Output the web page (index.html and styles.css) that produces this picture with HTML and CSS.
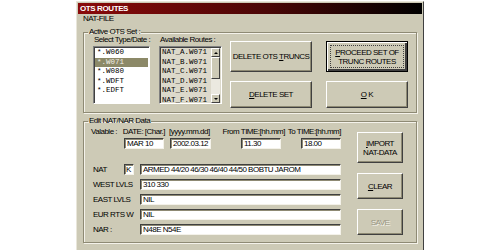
FILE: index.html
```html
<!DOCTYPE html>
<html>
<head>
    <link rel="stylesheet" href="styles.css">
</head>

<body>
<div class="window">
  <div class="titlebar">OTS ROUTES</div>
  <div class="menu">NAT-FILE</div>

  <fieldset class="group">
    <legend>Active OTS Set :</legend>
    <div class="ots-row">
      <div class="col col-types">
        <div class="cap">Select Type/Date :</div>
        <ul class="list list-types">
          <li>*.W060</li>
          <li class="sel">*.W071</li>
          <li>*.W080</li>
          <li>*.WDFT</li>
          <li>*.EDFT</li>
        </ul>
      </div>
      <div class="col col-routes">
        <div class="cap">Available Routes :</div>
        <div class="list list-routes">
          <ul>
            <li>NAT_A.W071</li>
            <li>NAT_B.W071</li>
            <li>NAT_C.W071</li>
            <li>NAT_D.W071</li>
            <li>NAT_E.W071</li>
            <li>NAT_F.W071</li>
          </ul>
          <div class="scrollbar">
            <span class="arrow up"></span>
            <span class="thumb"></span>
            <span class="track"></span>
            <span class="arrow down"></span>
          </div>
        </div>
      </div>
      <div class="btn-grid">
        <button class="btn tall"><span>DELETE OTS <u>T</u>RUNCS</span></button>
        <button class="btn tall default"><span class="focus"><span><u>P</u>ROCEED SET OF<br>TRUNC ROUTES</span></span></button>
        <button class="btn"><span><u>D</u>ELETE SET</span></button>
        <button class="btn"><span><u>O</u> K</span></button>
      </div>
    </div>
  </fieldset>

  <fieldset class="group group-edit">
    <legend>Edit NAT/NAR Data</legend>
    <div class="edit-row">
      <div class="fields">
        <div class="caps-row">
          <span class="c1">Valable :</span>
          <span class="c2">DATE: [Char.]</span>
          <span class="c3">[yyyy.mm.dd]</span>
          <span class="c4">From TIME:[hh.mm]</span>
          <span>To TIME:[hh.mm]</span>
        </div>
        <div class="time-row">
          <div class="input w40">MAR 10</div>
          <div class="input w41">2002.03.12</div>
          <div class="input w40 gap30">11.30</div>
          <div class="input w40 gap20">18.00</div>
        </div>
        <div class="line first">
          <span class="lbl short">NAT</span>
          <div class="input kbox">K</div>
          <div class="input wide">ARMED 44/20 46/30 46/40 44/50 BOBTU JAROM</div>
        </div>
        <div class="line">
          <span class="lbl">WEST LVLS</span>
          <div class="input wide">310 330</div>
        </div>
        <div class="line">
          <span class="lbl">EAST LVLS</span>
          <div class="input wide">NIL</div>
        </div>
        <div class="line">
          <span class="lbl">EUR RTS W</span>
          <div class="input wide">NIL</div>
        </div>
        <div class="line">
          <span class="lbl">NAR :</span>
          <div class="input wide">N48E N54E</div>
        </div>
      </div>
      <div class="side-btns">
        <button class="btn tall"><span><u>I</u>MPORT<br>NAT-DATA</span></button>
        <button class="btn"><span><u>C</u>LEAR</span></button>
        <button class="btn disabled"><span>SAVE</span></button>
      </div>
    </div>
  </fieldset>
</div>
</body>
</html>
```

FILE: styles.css
```css
* {
  margin: 0;
  padding: 0;
  box-sizing: border-box;
}
body {
  background: #fff;
  font-family: "Liberation Sans", Arial, sans-serif;
  font-size: 8px;
  letter-spacing: -0.5px;
  color: #000;
}
.window {
  margin: 1px 0 0 76px;
  width: 348px;
  height: 260px;
  padding: 1px;
  background: #cdcab6;
  border: 1px solid;
  border-color: #e9e6da #404040 #404040 #e9e6da;
}
.titlebar {
  height: 11px;
  line-height: 11px;
  padding-left: 2px;
  font-weight: bold;
  letter-spacing: -0.4px;
  color: #fff;
  background: linear-gradient(to right, #8a0a0a, #4a0606 55%, #000);
}
.menu {
  height: 10px;
  line-height: 10px;
  padding-left: 5px;
}

/* group boxes */
.group {
  margin: 3px 5px 0 5px;
  padding: 0 0 4px 0;
  border: 1px solid #8e8a74;
  box-shadow: 1px 1px 0 #f4f2ea, inset 1px 1px 0 #f4f2ea;
}
.group legend {
  margin-left: 4px;
  padding: 0 1px;
  line-height: 10px;
}
.group-edit {
  margin-top: 3px;
  padding-bottom: 7px;
}

/* active ots set */
.ots-row {
  display: flex;
  margin-top: -2px;
}
.col-types {
  margin-left: 9px;
  width: 57px;
}
.col-routes {
  margin-left: 9px;
  width: 63px;
}
.cap {
  line-height: 10px;
  padding-left: 1px;
  white-space: nowrap;
}
.list {
  margin-top: 1px;
  height: 58px;
  list-style: none;
  border: 1px solid;
  border-color: #808080 #fff #fff #808080;
  box-shadow: inset 1px 1px 0 #404040;
  padding: 1px 1px 0 1px;
  font-family: "Liberation Mono", "Courier New", monospace;
  font-size: 7.5px;
  letter-spacing: 0;
}
.list li {
  height: 9.5px;
  line-height: 9.5px;
  padding-left: 2px;
}
.list-types {
  background: #fff;
}
.list-types .sel {
  background: #8c8968;
  color: #f0eee4;
}
.list-routes {
  display: flex;
  background: #dcd9cb;
}
.list-routes ul {
  flex: 1;
  list-style: none;
}
.list-routes li {
  padding-left: 1px;
}
.scrollbar {
  width: 9px;
  display: flex;
  flex-direction: column;
}
.scrollbar .arrow,
.scrollbar .thumb {
  background: #cdcab6;
  border: 1px solid;
  border-color: #fff #404040 #404040 #fff;
  display: flex;
  justify-content: center;
  align-items: center;
}
.scrollbar .arrow {
  height: 9px;
}
.scrollbar .arrow::after {
  content: "";
  border-left: 2px solid transparent;
  border-right: 2px solid transparent;
}
.scrollbar .up::after {
  border-bottom: 2px solid #000;
}
.scrollbar .down::after {
  border-top: 2px solid #000;
}
.scrollbar .thumb {
  height: 22px;
}
.scrollbar .track {
  flex: 1;
  background: #ebe9e0;
}

/* buttons */
.btn-grid {
  margin: 6px 0 0 8px;
  display: grid;
  grid-template-columns: 82px 82px;
  grid-template-rows: 31px 27px;
  column-gap: 14px;
  row-gap: 9px;
}
.btn {
  font-family: inherit;
  font-size: 8px;
  letter-spacing: -0.5px;
  line-height: 9px;
  color: #000;
  background: #cdcab6;
  border: 1px solid;
  border-color: #fff #404040 #404040 #fff;
  box-shadow: inset -1px -1px 0 #8e8a74;
  display: flex;
  justify-content: center;
  align-items: center;
  text-align: center;
  white-space: nowrap;
}
.btn u {
  text-decoration-thickness: 1px;
}
.btn.default {
  border: 1px solid #000;
  box-shadow: inset 1px 1px 0 #fff, inset -2px -2px 0 #404040;
  padding: 3px;
  align-items: stretch;
}
.btn .focus {
  flex: 1;
  border: 1px dotted #404040;
  display: flex;
  align-items: center;
  justify-content: center;
}
.btn.disabled {
  color: #9a9784;
  text-shadow: 1px 1px 0 #f4f2ea;
}

/* edit nat/nar */
.edit-row {
  display: flex;
}
.fields {
  margin-left: 7px;
  width: 250px;
}
.caps-row {
  margin-top: 1px;
  display: flex;
  line-height: 10px;
  white-space: nowrap;
}
.c1 { width: 32px; }
.c2 { width: 47px; }
.c3 { width: 54px; }
.c4 { width: 66px; }
.time-row {
  display: flex;
  margin: 1px 0 0 33px;
  gap: 6px;
}
.input {
  height: 11px;
  line-height: 9px;
  padding-left: 2px;
  background: #fff;
  border: 1px solid;
  border-color: #404040 #f4f2ea #f4f2ea #404040;
  box-shadow: inset 1px 1px 0 #8e8a74;
  white-space: nowrap;
  overflow: hidden;
}
.w40 { width: 40px; }
.w41 { width: 41px; }
.gap30 { margin-left: 24px; }
.gap20 { margin-left: 14px; }
.line {
  display: flex;
  align-items: center;
  margin-top: 4px;
  white-space: nowrap;
}
.line.first {
  margin-top: 15px;
}
.lbl {
  width: 49px;
  padding-left: 2px;
}
.lbl.short {
  width: 33px;
}
.kbox {
  width: 10px;
  margin-right: 6px;
  padding-left: 1px;
}
.wide {
  width: 201px;
}
.side-btns {
  margin: 6px 0 0 16px;
  width: 46px;
  display: flex;
  flex-direction: column;
  gap: 10px;
}
.side-btns .btn {
  height: 26px;
}
.side-btns .btn.tall {
  height: 31px;
}
```
